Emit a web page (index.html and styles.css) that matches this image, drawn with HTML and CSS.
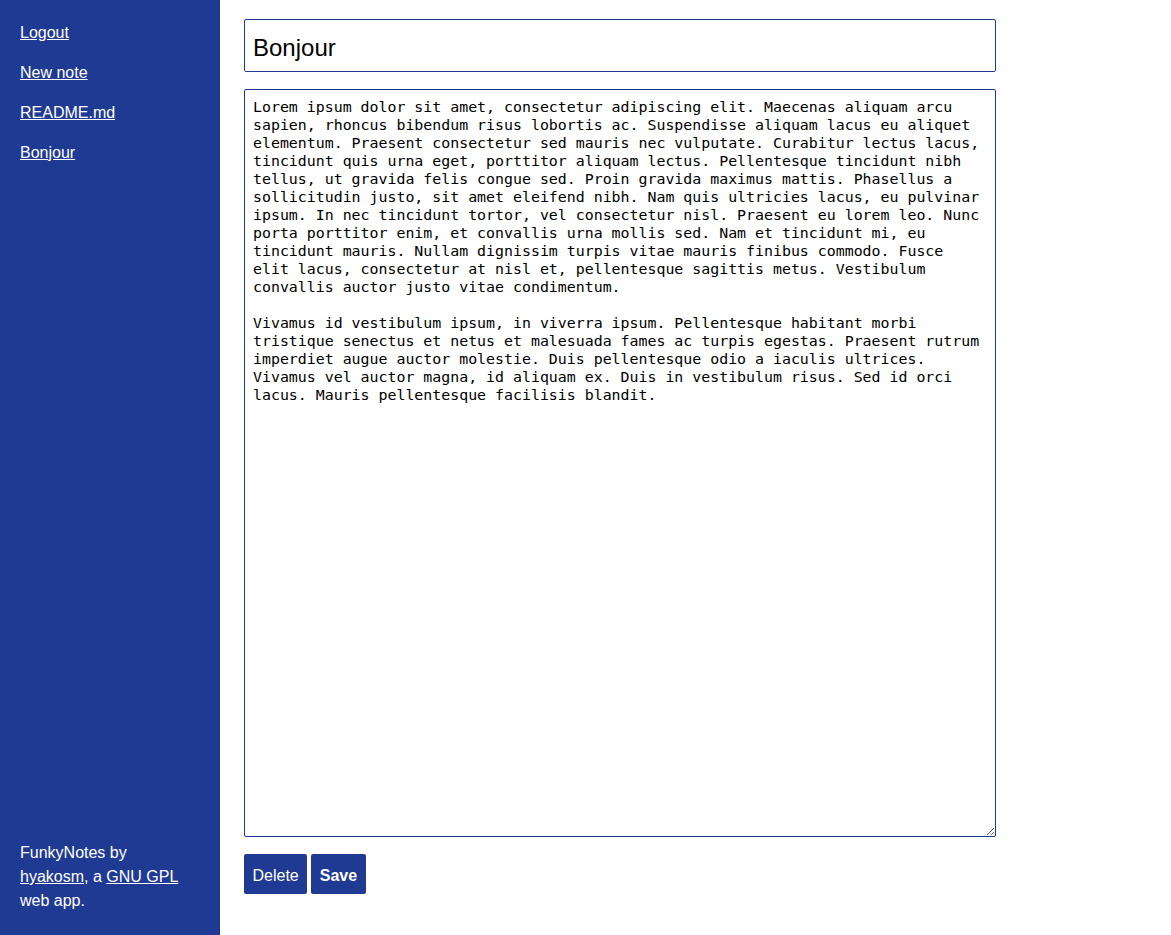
FILE: index.html
```html
<!DOCTYPE html>
<html lang="en">
<head>
<meta charset="utf-8">
<title>FunkyNotes</title>
<link rel="stylesheet" href="styles.css">
</head>
<body>
<div class="layout">
  <nav class="sidebar">
    <ul class="links">
      <li><a href="#">Logout</a></li>
      <li><a href="#">New note</a></li>
      <li><a href="#">README.md</a></li>
      <li><a href="#">Bonjour</a></li>
    </ul>
    <p class="credits">FunkyNotes by<br><a href="#">hyakosm</a>, a <a href="#">GNU GPL</a><br>web app.</p>
  </nav>
  <main class="editor">
    <input class="title" type="text" value="Bonjour">
    <textarea class="body">Lorem ipsum dolor sit amet, consectetur adipiscing elit. Maecenas aliquam arcu sapien, rhoncus bibendum risus lobortis ac. Suspendisse aliquam lacus eu aliquet elementum. Praesent consectetur sed mauris nec vulputate. Curabitur lectus lacus, tincidunt quis urna eget, porttitor aliquam lectus. Pellentesque tincidunt nibh tellus, ut gravida felis congue sed. Proin gravida maximus mattis. Phasellus a sollicitudin justo, sit amet eleifend nibh. Nam quis ultricies lacus, eu pulvinar ipsum. In nec tincidunt tortor, vel consectetur nisl. Praesent eu lorem leo. Nunc porta porttitor enim, et convallis urna mollis sed. Nam et tincidunt mi, eu tincidunt mauris. Nullam dignissim turpis vitae mauris finibus commodo. Fusce elit lacus, consectetur at nisl et, pellentesque sagittis metus. Vestibulum convallis auctor justo vitae condimentum.

Vivamus id vestibulum ipsum, in viverra ipsum. Pellentesque habitant morbi tristique senectus et netus et malesuada fames ac turpis egestas. Praesent rutrum imperdiet augue auctor molestie. Duis pellentesque odio a iaculis ultrices. Vivamus vel auctor magna, id aliquam ex. Duis in vestibulum risus. Sed id orci lacus. Mauris pellentesque facilisis blandit.</textarea>
    <div class="actions">
      <button class="btn" type="button">Delete</button>
      <button class="btn btn-save" type="button">Save</button>
    </div>
  </main>
</div>
</body>
</html>
```
FILE: styles.css
```css
html, body {
  margin: 0;
  padding: 0;
  height: 100%;
}
body {
  font-family: "Liberation Sans", Arial, sans-serif;
  font-size: 16px;
  color: #000;
  background: #fff;
}
.layout {
  display: flex;
  height: 935px;
}
.sidebar {
  width: 220px;
  flex: none;
  box-sizing: border-box;
  background: #1f3a93;
  color: #fff;
  padding: 21px 20px 22px;
  display: flex;
  flex-direction: column;
  justify-content: space-between;
}
.sidebar a {
  color: #fff;
}
.links {
  list-style: none;
  margin: 0;
  padding: 0;
  display: flex;
  flex-direction: column;
  gap: 16px;
  line-height: 24px;
}
.credits {
  margin: 0;
  line-height: 24px;
}
.editor {
  flex: none;
  width: 752px;
  padding: 19px 0 0 24px;
  display: flex;
  flex-direction: column;
  gap: 17px;
}
.title {
  box-sizing: border-box;
  width: 752px;
  height: 53px;
  margin: 0;
  padding: 4px 8px 0;
  border: 1px solid #1f3a93;
  border-radius: 2px;
  font-family: "Liberation Sans", Arial, sans-serif;
  font-size: 24px;
  color: #000;
  outline: none;
}
.body {
  box-sizing: border-box;
  width: 752px;
  height: 748px;
  margin: 0;
  padding: 8px 8px;
  border: 1px solid #1f3a93;
  border-radius: 2px;
  font-family: "DejaVu Sans Mono", monospace;
  font-size: 14.9px;
  line-height: 18px;
  color: #000;
  outline: none;
}
.actions {
  display: flex;
  gap: 4px;
}
.btn {
  height: 40px;
  padding: 3px 8.5px 0;
  margin: 0;
  border: none;
  border-radius: 2px;
  background: #1f3a93;
  color: #fff;
  font-family: "Liberation Sans", Arial, sans-serif;
  font-size: 16px;
}
.btn-save {
  font-weight: bold;
}
```
